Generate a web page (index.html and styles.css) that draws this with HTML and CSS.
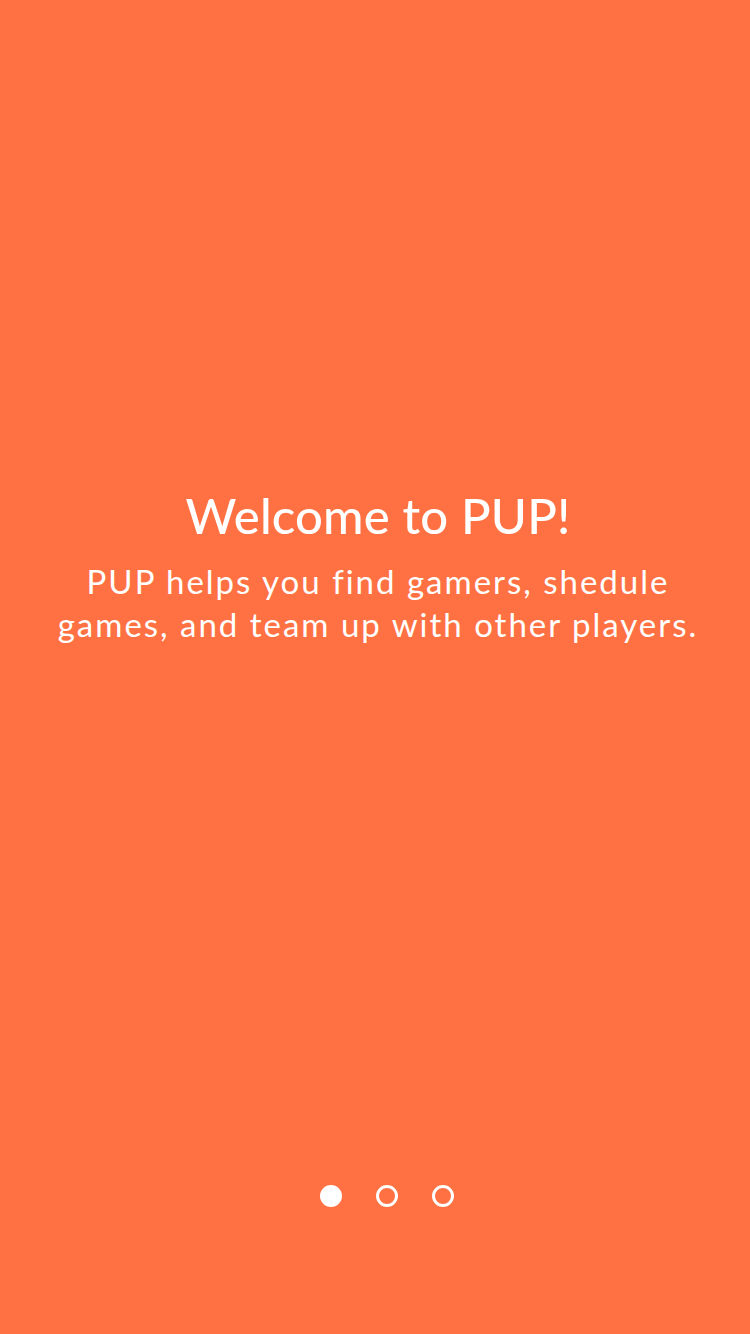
FILE: index.html
```html
<!DOCTYPE html>
<html lang="en">
<head>
<meta charset="utf-8">
<title>Welcome to PUP!</title>
<link rel="stylesheet" href="styles.css">
</head>
<body>
<main class="screen">
  <section class="intro">
    <h1 class="title">Welcome to PUP!</h1>
    <p class="subtitle">PUP helps you find gamers, shedule<br>games, and team up with other players.</p>
  </section>
  <nav class="dots" aria-label="Pages">
    <span class="dot dot-active"></span>
    <span class="dot"></span>
    <span class="dot"></span>
  </nav>
</main>
</body>
</html>
```

FILE: styles.css
```css
html, body {
  margin: 0;
  padding: 0;
}
body {
  background: #ff7143;
  font-family: Lato, "Open Sans", "Noto Sans", sans-serif;
  color: #ffffff;
}
.screen {
  width: 750px;
  height: 1334px;
  display: flex;
  flex-direction: column;
  align-items: center;
  box-sizing: border-box;
  padding-bottom: 127px;
}
.intro {
  padding-top: 486px;
  padding-left: 6px;
  text-align: center;
  width: 720px;
}
.title {
  margin: 0;
  font-size: 49px;
  font-weight: 500;
  line-height: 58px;
  letter-spacing: 0.2px;
}
.subtitle {
  margin: 16px 0 0;
  font-size: 33px;
  font-weight: 400;
  line-height: 43px;
  letter-spacing: 2px;
}
.dots {
  margin-top: auto;
  margin-left: 24px;
  display: flex;
  gap: 34px;
}
.dot {
  width: 22px;
  height: 22px;
  border-radius: 50%;
  box-sizing: border-box;
  border: 3px solid #ffffff;
}
.dot-active {
  background: #ffffff;
}
```
